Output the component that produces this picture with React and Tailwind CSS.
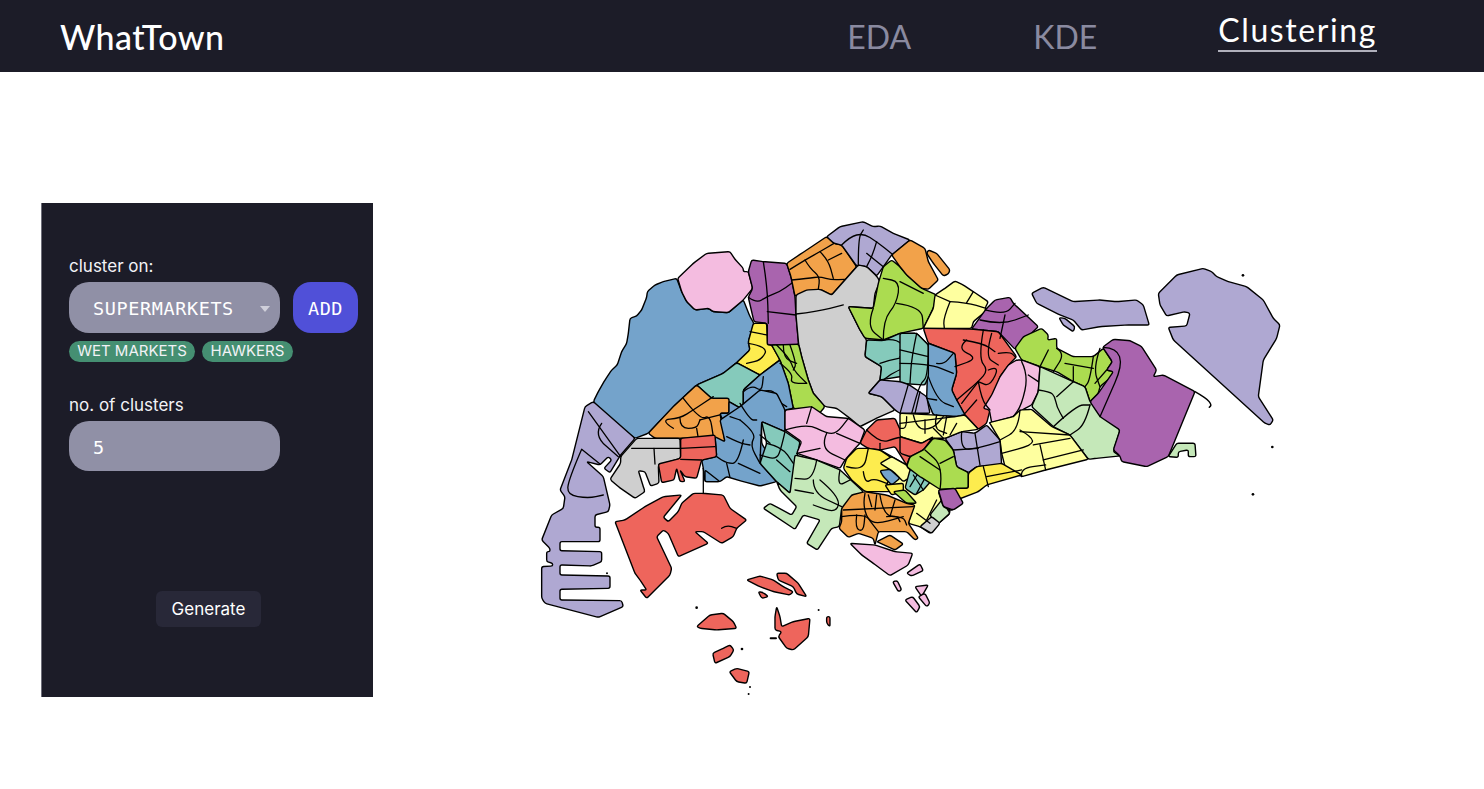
const blue = '#74a3cb';
const pink = '#f4bce0';
const purple = '#a964ae';
const orange = '#f2a24a';
const lav = '#afa8d2';
const gray = '#cfcfcf';
const lime = '#abdc50';
const teal = '#85cabb';
const yellow = '#fdec4e';
const pale = '#feff9f';
const red = '#ee655c';
const mint = '#c5e8b9';

// each group is traced at 3x, with its own page offset
const mapGroups = [
  {
    x: 530, y: 210,
    fills: [
      [blue, '440,205 455,245 470,275 495,300 535,295 550,305 595,308 640,270 660,320 672,340 655,395 660,420 620,458 580,490 500,525 430,590 355,670 315,685 250,640 190,575 205,545 225,510 245,480 262,465 275,425 290,400 295,370 300,325 320,318 335,300 350,262 352,245 375,225 400,215'],
      [pink, '443,205 490,160 530,130 600,125 615,148 640,175 640,185 655,185 668,235 640,270 595,308 550,305 535,295 495,300 470,275 455,245'],
      [purple, '665,150 700,155 770,160 783,200 795,260 798,315 806,403 712,405 712,340 672,335 655,262 668,235 655,185'],
      [orange, '770,160 815,130 890,80 912,100 935,105 980,170 905,255 870,238 795,258 783,200'],
      [lav, '890,80 930,50 1000,35 1030,50 1050,48 1090,70 1140,90 1085,135 1060,170 1040,198 1010,170 980,168 935,105 912,100'],
      [gray, '798,255 830,240 870,238 905,255 985,165 1010,170 1040,198 1050,215 1035,250 1030,295 955,290 990,360 1010,390 1005,440 1055,470 1050,510 1015,550 1055,560 1095,600 1040,625 990,650 960,625 920,595 885,590 850,550 835,510 815,440 806,403 798,315'],
      [lime, '955,290 1030,295 1045,220 1060,170 1085,150 1110,170 1130,195 1175,235 1220,255 1210,295 1180,355 1110,370 1060,390 1005,385 990,360'],
      [teal, '1010,390 1060,392 1110,370 1160,370 1195,405 1195,495 1180,510 1110,500 1050,510 1055,470 1005,440'],
      [yellow, '670,340 710,340 712,405 725,405 750,450 690,495 620,458 660,420 655,395'],
      [teal, '500,525 580,490 620,458 690,495 640,540 640,600 597,575 545,565'],
      [lime, '725,405 806,403 815,440 835,510 850,550 885,590 860,620 835,605 790,595 775,520 750,450'],
      [orange, '355,670 430,590 500,525 545,565 597,565 597,610 570,610 585,695 560,705 555,680 510,685 375,685'],
      [blue, '640,540 690,495 750,450 775,520 790,595 765,600 765,665 695,630 695,700 725,750 690,760 640,750 590,750 570,705 597,680 570,610 597,610 597,575 640,600'],
    ],
    lines: [
      '700,155 712,230 715,340',
      '655,262 680,280 710,260 750,245 785,220',
      '712,305 798,315',
      '798,312 860,305 940,285',
      '780,178 825,150 870,125 912,100',
      '785,210 835,205 870,200 905,210 945,208',
      '825,150 840,175 870,200 865,238',
      '870,125 895,150 910,205',
      '895,150 935,130',
      '985,165 985,85 1000,60',
      '935,105 960,80 1000,70 1040,95 1090,135',
      '1010,130 1060,170',
      '1040,95 1030,130 1010,170',
      '1060,390 1060,330 1100,280 1110,215 1060,205',
      '1030,295 1010,350 1060,390',
      '1100,280 1175,290 1180,355',
      '1110,215 1180,250',
      '1060,390 1100,385 1130,420 1160,370',
      '1050,460 1110,440 1195,440',
      '1110,440 1130,500',
      '1060,510 1110,470 1195,470',
      '660,365 710,375',
      '655,400 715,410 695,450 650,460',
      '740,405 780,445 790,480 830,520',
      '760,405 760,445 800,460',
      '780,405 800,460 790,480',
      '750,460 790,490 780,520 830,520',
      '430,655 390,630 450,625 490,600 550,560',
      '460,565 510,630 540,615 550,680',
      '450,625 450,655 500,655 510,630',
      '500,655 505,685',
      '510,630 570,615',
      '640,545 665,525 695,545 700,500',
      '695,545 730,535 745,575 770,590',
      '640,585 675,585 725,610 745,600 745,575',
      '680,585 695,555 725,570',
      '695,610 640,620 625,650 655,685 690,700',
      '655,650 690,620 695,640 680,680',
      '640,600 625,640',
      '580,695 640,695 625,750',
      '635,700 665,690',
    ],
  },
  {
    x: 740, y: 400,
    fills: [
      [pale, '420,150 500,195 560,180 600,270 625,290 630,340 590,375 570,400 540,380 505,370 520,315 460,275 440,250'],
      [blue, '60,-30 110,-20 135,30 135,95 65,65 60,190 110,245 60,258 10,245 -40,230 -60,245 -105,245 -110,205 -115,180 -70,170 -75,110 -45,125 -60,60 0,20'],
      [teal, '65,65 135,95 180,125 165,200 150,280 110,245 60,190 80,130'],
      [pink, '135,30 215,20 260,50 325,55 375,90 360,130 345,145 315,180 300,205 230,180 170,160 185,125 135,90'],
      [mint, '110,245 120,270 170,320 155,345 90,310 70,325 165,388 190,345 240,360 200,430 232,450 275,385 298,380 305,325 370,275 300,210 230,180 165,165 150,280'],
      [orange, '305,325 335,285 375,275 440,285 500,310 525,315 505,370 535,415 525,420 500,395 415,395 405,435 400,415 355,400 325,412 297,385 305,365'],
      [orange, '410,425 450,405 490,432 465,450'],
      [pink, '330,430 405,435 465,455 518,460 505,495 450,527 400,490 365,465'],
      [pink, '500,520 540,492 550,512 515,528'],
      [pink, '458,545 472,542 485,570 475,575'],
      [pink, '495,600 518,590 540,620 530,638'],
      [pink, '525,560 565,555 545,590'],
      [pink, '535,590 555,580 570,610 560,620'],
      [red, '360,130 380,90 410,60 465,55 490,110 545,130 580,110 550,150 510,170 500,195 465,140 420,150 385,145'],
      [yellow, '310,205 320,175 350,145 385,145 420,150 450,170 480,200 440,250 460,275 375,275 335,240'],
      [pale, '420,190 455,170 500,195 520,225 490,245 460,215'],
      [blue, '420,212 450,208 480,235 455,255 430,230'],
      [yellow, '435,255 490,250 490,275 455,285'],
      [teal, '495,265 510,210 540,185 580,235 550,270 525,285'],
      [lime, '460,275 495,270 530,310 500,310'],
      [mint, '570,345 605,300 630,340 590,375'],
      [gray, '540,380 575,350 600,370 575,400'],
      [purple, '595,275 645,270 665,310 635,332 610,320'],
    ],
    lines: [
      '0,60 50,100 30,135 60,190',
      '-40,110 0,130 30,135',
      '80,130 125,140 160,190',
      '135,95 125,140 110,180 60,165',
      '110,180 150,215',
      '90,130 60,105',
      '0,10 30,60 50,60',
      '-30,50 0,60',
      '135,90 200,70 260,100 290,100 325,55',
      '200,70 215,20',
      '260,100 240,145 315,180',
      '170,160 240,145',
      '290,100 360,130',
      '230,180 220,240 165,235',
      '220,240 220,280 305,320',
      '240,240 300,290 290,340 220,315',
      '165,270 220,280',
      '300,210 290,260 330,240',
      '310,330 520,320',
      '305,350 375,340 400,375 490,350',
      '375,280 365,330 415,395',
      '420,285 430,350 490,350 500,375',
      '465,300 450,350',
      '385,285 395,320',
      '410,285 405,330',
      '350,345 345,385 370,395 375,345',
      '440,350 470,345 480,365',
      '380,90 420,130 465,115 490,110',
      '420,150 420,130',
      '320,200 370,215 385,145',
      '370,215 375,250 400,235 440,250',
      '520,225 550,270',
      '540,210 510,260',
      '560,225 530,280',
      '530,340 570,370',
      '590,300 560,360',
      '505,205 535,190',
    ],
  },
  {
    x: 530, y: 440,
    fills: [
      [lav, '165,-100 190,-115 315,-5 272,45 240,98 222,85 245,60 235,50 210,75 170,65 220,110 240,195 235,215 195,225 195,262 210,262 210,305 90,305 90,332 215,335 215,365 185,378 90,375 90,405 240,408 240,445 90,448 90,480 275,482 280,500 205,532 45,490 35,475 35,380 68,378 68,370 50,365 50,335 60,335 60,325 35,300 65,225 100,205 105,170 90,150 125,60'],
      [gray, '272,50 320,-5 450,-5 452,55 385,75 387,130 362,138 345,95 325,92 340,140 345,155 315,175 265,140 240,118 272,70'],
      [red, '452,-5 555,-15 560,50 515,60 500,115 465,110 450,90 465,125 450,125 440,85 432,120 395,128 385,72 452,55'],
      [blue, '525,90 570,125 525,125'],
      [red, '255,245 285,240 345,200 400,170 455,165 400,232 415,245 445,215 455,190 490,160 520,160 580,165 600,205 650,240 620,265 610,290 575,310 520,275 495,275 535,310 445,350 415,280 400,270 380,290 425,385 420,405 350,475 330,450 350,450 330,420 315,400'],
      [red, '650,420 690,408 730,420 760,440 790,455 780,465 730,455 690,440'],
      [red, '740,400 770,400 805,430 830,470 800,462 790,440 745,420'],
      [red, '500,560 540,525 580,520 610,545 620,565 560,570 510,565'],
      [red, '735,530 740,500 750,530 755,560 790,545 840,535 835,590 790,630 770,625 745,590 755,575 735,570'],
      [red, '548,640 580,625 600,615 612,630 600,650 555,670'],
      [red, '598,695 620,685 658,695 650,730 620,725'],
      [red, '890,530 900,530 900,560 890,550'],
      [red, '685,455 700,458 715,470 695,475'],
    ],
    lines: [
      '155,28 115,120 112,165 175,175 220,165',
      '175,-85 272,50',
      '215,-50 190,-15 265,50',
      '155,28 210,72',
      '305,25 450,25',
      '372,25 375,72',
      '452,25 555,20',
      '452,58 515,60',
      '640,0 625,70 590,70 560,50',
      '625,70 690,100',
      '590,70 600,112',
      '520,85 520,160',
      '575,265 590,255 620,265',
    ],
    dots: [[500, 503, 4], [636, 627, 4], [660, 741, 3], [656, 762, 3], [866, 510, 3], [231, 400, 3]],
    bars: ['722,595 738,595'],
  },
  {
    x: 900, y: 250,
    fills: [
      [orange, '-25,15 30,-30 75,-5 85,35 115,90 85,118 65,115 20,75 0,50'],
      [orange, '85,0 110,10 150,60 145,72 130,78 100,40 80,10'],
      [pale, '135,115 165,93 190,105 220,125 265,155 255,175 262,180 220,215 215,235 70,235 100,175 105,135'],
      [purple, '215,237 295,245 345,298 415,230 340,160 330,142 285,150 260,175'],
      [red, '70,235 215,237 295,245 350,320 330,340 300,380 270,480 260,520 235,538 195,495 170,450 155,420 170,370 165,310 85,280'],
      [blue, '85,280 165,310 170,370 155,420 170,450 195,495 165,500 100,495 80,445'],
      [teal, '0,250 50,250 85,285 85,380 75,405 0,400'],
      [lav, '-95,430 -60,390 0,395 25,403 80,440 90,490 0,490 -15,480 -55,440'],
      [lime, '345,295 370,260 425,235 445,255 443,270 470,265 470,295 520,320 580,320 610,295 637,335 620,360 640,365 635,380 600,410 595,430 570,455 555,410 520,395 470,365 420,350 365,330'],
      [pink, '350,330 365,330 420,350 415,425 395,465 370,478 340,500 275,518 268,480 250,475 275,435 300,380 325,345'],
      [mint, '420,350 520,395 555,410 570,455 660,540 640,605 660,618 590,625 565,628 510,555 460,530 395,470 415,425'],
      [purple, '610,290 640,268 690,272 725,290 770,360 760,380 790,375 885,425 805,620 740,650 665,635 660,618 640,600 660,540 600,500 570,455 595,430 640,365 620,360 637,335 610,295'],
      [mint, '805,620 830,580 885,580 888,620 865,620 865,600 835,605 835,622'],
      [lav, '395,130 430,112 520,155 600,150 650,155 710,150 730,165 748,225 680,225 600,230 545,240 520,210 480,195 410,160'],
      [lav, '477,203 495,205 525,230 520,245 490,225'],
      [lav, '775,130 830,75 910,55 935,65 950,80 985,95 1040,110 1090,150 1120,205 1140,225 1130,265 1090,330 1075,440 1120,510 1110,525 1095,520 820,270 805,232 860,228 870,190 855,185 800,198 780,165'],
      [pale, '268,518 340,500 360,480 395,478 455,530 510,555 565,628 437,660 365,680 315,650 305,610 300,570 270,520'],
      [lav, '135,565 185,545 225,550 260,525 300,570 305,645 230,650 205,668 170,650 160,600'],
      [pale, '0,490 100,495 165,500 195,495 235,538 185,545 135,565 95,565 65,580 0,560'],
      [red, '0,560 65,580 100,560 70,600 30,620 0,610'],
      [lime, '20,650 30,620 70,600 100,565 135,570 160,600 170,650 205,668 205,715 120,718 60,680'],
      [yellow, '205,670 230,650 305,640 365,675 260,705 235,725 170,750 165,715 205,715'],
      [purple, '115,720 165,715 190,760 160,780 130,770'],
    ],
    lines: [
      '220,125 200,158',
      '150,155 200,158 258,175',
      '150,155 130,205 133,235',
      '105,135 150,155',
      '255,180 315,195 345,160',
      '240,210 305,225 385,195',
      '315,195 300,265',
      '190,270 250,280 285,305',
      '200,270 170,295 235,325 165,350',
      '250,240 235,325 265,360 235,395 170,450',
      '275,250 255,320 295,345',
      '295,310 330,305 345,320',
      '265,360 300,345 270,410 235,395',
      '235,395 185,460',
      '230,450 195,490',
      '235,395 245,450 270,480',
      '445,300 420,350',
      '470,295 495,310 460,365',
      '520,350 520,395',
      '495,340 580,355',
      '580,320 570,390 555,410',
      '600,295 580,355 600,410',
      '620,360 585,400',
      '365,335 385,375 365,465 340,500',
      '385,375 415,395',
      '415,420 450,425 465,440 470,470 490,505',
      '520,395 470,440',
      '460,530 530,465 570,465',
      '570,465 555,525 510,555',
      '610,292 690,295 600,500',
      '360,480 355,540 300,570',
      '360,540 395,560 400,585 305,610',
      '360,545 510,555',
      '400,585 510,565',
      '420,585 437,660',
      '430,630 550,600',
      '365,680 360,655 437,645',
      '185,545 180,600 235,595 300,575',
      '225,550 240,645',
      '160,600 235,595',
      '85,280 85,380 60,400 35,490',
      '0,300 85,320',
      '0,340 85,340 160,370',
      '50,250 35,320 30,400',
      '110,340 130,345 160,310',
      '85,380 110,450 160,470',
      '80,445 110,450',
      '25,403 0,490',
      '60,425 45,490',
      '0,520 165,500',
      '40,495 50,540 100,535 130,500',
      '100,535 130,565',
      '20,500 20,535 0,535',
      '75,550 75,510',
      '110,495 100,535 140,550',
      '140,500 130,555',
      '170,520 150,555',
      '120,718 130,650 75,600',
      '160,620 120,640',
      '60,620 120,660',
      '250,650 265,710',
      '260,680 365,660',
    ],
    tails: ['885,425 920,445 935,465 928,472'],
    dots: [[1029, 76, 4], [1117, 591, 4], [1059, 733, 4]],
  },
];

const parsePts = (s) => s.split(' ').map((p) => p.split(',').map(Number));

// polygon with its corners cut a little, the coast isn't really straight segments
function roundedPath(s, r = 6) {
  const pts = parsePts(s);
  const n = pts.length;
  let d = '';
  pts.forEach((p, i) => {
    const a = pts[(i + n - 1) % n];
    const b = pts[(i + 1) % n];
    const la = Math.hypot(a[0] - p[0], a[1] - p[1]);
    const lb = Math.hypot(b[0] - p[0], b[1] - p[1]);
    const ra = Math.min(r, la / 2);
    const rb = Math.min(r, lb / 2);
    const sx = p[0] + ((a[0] - p[0]) * ra) / la;
    const sy = p[1] + ((a[1] - p[1]) * ra) / la;
    const ex = p[0] + ((b[0] - p[0]) * rb) / lb;
    const ey = p[1] + ((b[1] - p[1]) * rb) / lb;
    d += `${i ? 'L' : 'M'}${sx} ${sy}Q${p[0]} ${p[1]} ${ex} ${ey}`;
  });
  return d + 'Z';
}

function smoothLine(s) {
  const pts = parsePts(s);
  let d = `M${pts[0][0]} ${pts[0][1]}`;
  for (let i = 1; i < pts.length - 1; i++) {
    const mx = (pts[i][0] + pts[i + 1][0]) / 2;
    const my = (pts[i][1] + pts[i + 1][1]) / 2;
    d += `Q${pts[i][0]} ${pts[i][1]} ${mx} ${my}`;
  }
  const last = pts[pts.length - 1];
  return d + `L${last[0]} ${last[1]}`;
}

function IslandMap() {
  return (
    <svg viewBox="530 210 760 495" className="w-[760px] h-[495px] ml-[157px] mt-[7px] shrink-0" strokeLinejoin="round" strokeLinecap="round">
      {mapGroups.map((g, i) => (
        <g key={i} transform={`translate(${g.x} ${g.y}) scale(0.3333)`}>
          {g.fills.map(([color, pts], j) => (
            <path key={j} d={roundedPath(pts)} fill={color} stroke="#000" strokeWidth="1.4" vectorEffect="non-scaling-stroke" />
          ))}
          {g.lines.map((pts, j) => (
            <path key={j} d={smoothLine(pts)} fill="none" stroke="#000" strokeWidth="1.3" vectorEffect="non-scaling-stroke" />
          ))}
          {(g.tails || []).map((pts, j) => (
            <path key={j} d={smoothLine(pts)} fill="none" stroke="#000" strokeWidth="1.5" vectorEffect="non-scaling-stroke" />
          ))}
          {(g.bars || []).map((pts, j) => (
            <path key={j} d={smoothLine(pts)} fill="none" stroke="#000" strokeWidth="2" vectorEffect="non-scaling-stroke" />
          ))}
          {(g.dots || []).map(([cx, cy, r], j) => (
            <circle key={j} cx={cx} cy={cy} r={r} fill="#000" />
          ))}
        </g>
      ))}
    </svg>
  );
}

function Sidebar() {
  return (
    <div className="w-[332px] h-[494px] shrink-0 bg-[#1c1c28] border-l border-[#6e6e7a] pl-[27px] pt-[54px] font-['Inter',sans-serif] text-[#f2f2f6]">
      <div className="text-[17px] leading-[19px]">cluster on:</div>
      <div className="flex gap-[13px] mt-[6px]">
        <div className="w-[211px] h-[51px] rounded-[20px] bg-[#9090a6] pl-6 pr-[10px] pt-[3px] flex items-center justify-between font-['DejaVu_Sans_Mono',monospace] text-[18.5px] tracking-[0.6px] text-white">
          <span>SUPERMARKETS</span>
          <span className="w-0 h-0 border-l-[5px] border-r-[5px] border-t-[6px] border-l-transparent border-r-transparent border-t-[#cfcfda]" />
        </div>
        <div className="w-[65px] h-[51px] rounded-[18px] bg-[#5050d8] pt-[3px] flex items-center justify-center font-['DejaVu_Sans_Mono',monospace] text-[18.5px] tracking-[0.6px] text-white">
          ADD
        </div>
      </div>
      <div className="flex gap-[7px] mt-2">
        <span className="w-[126px] h-[21px] rounded-full bg-[#458f72] flex items-center justify-center text-[15px]">WET MARKETS</span>
        <span className="w-[91px] h-[21px] rounded-full bg-[#458f72] flex items-center justify-center text-[15px]">HAWKERS</span>
      </div>
      <div className="text-[17px] leading-[19px] mt-[34px]">no. of clusters</div>
      <div className="w-[211px] h-[50px] rounded-[20px] bg-[#9090a6] pl-6 pt-[3px] flex items-center mt-[6px] font-['DejaVu_Sans_Mono',monospace] text-[18.5px] text-white">
        5
      </div>
      <button className="block w-[105px] h-9 rounded-md bg-[#282838] pt-[2px] text-[17px] text-white ml-[87px] mt-[120px]">Generate</button>
    </div>
  );
}

export default function App() {
  return (
    <div className="min-h-[789px] bg-white">
      <header className="h-[72px] bg-[#1c1c28] flex items-start font-['Lato',sans-serif]">
        <div className="pl-[60px] pt-[16px] text-[34px] leading-[41px] tracking-[0.4px] font-medium text-white">WhatTown</div>
        <nav className="ml-auto flex items-start pr-[107px] text-[32px] leading-[38px]">
          <span className="mt-[18px] text-[#8a8aa0]">EDA</span>
          <span className="mt-[18px] ml-[122px] text-[#8a8aa0]">KDE</span>
          <span className="mt-[11px] ml-[121px] tracking-[1.6px] text-white border-b-2 border-[#b0b0bc] pb-[1px]">Clustering</span>
        </nav>
      </header>
      <main className="flex items-start pl-[41px] pt-[131px]">
        <Sidebar />
        <IslandMap />
      </main>
    </div>
  );
}
